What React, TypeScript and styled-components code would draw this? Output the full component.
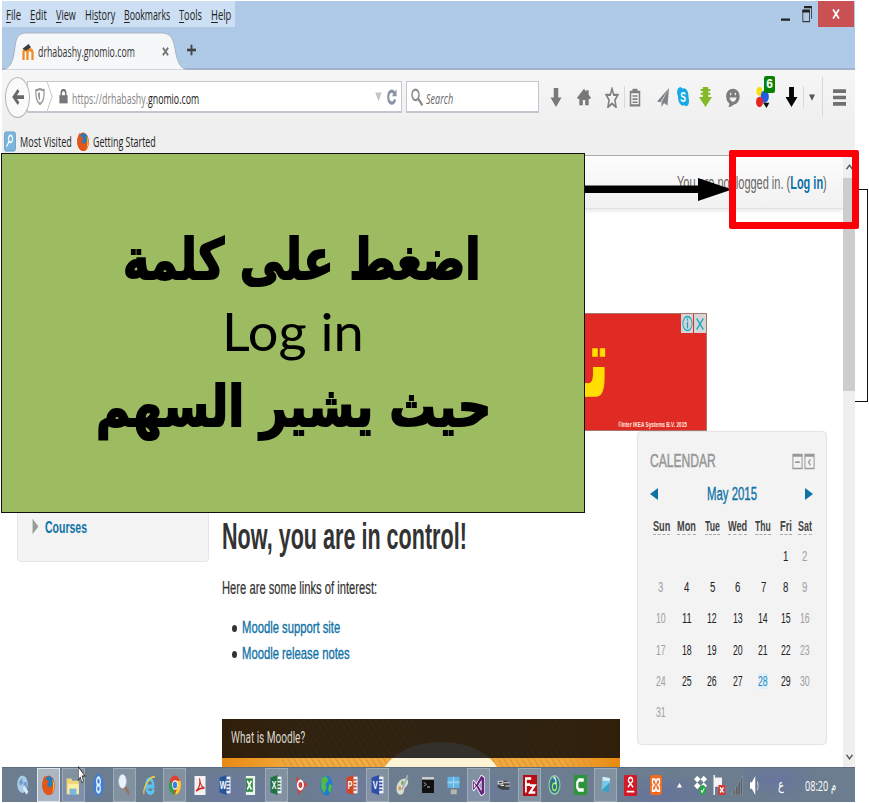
import React, { useLayoutEffect, useRef, useState, ReactNode } from "react";
import styled, { createGlobalStyle, css } from "styled-components";

const GlobalStyle = createGlobalStyle`
  * { box-sizing: border-box; }
  body { margin: 0; background: #fff; overflow: hidden; }
`;

const UI = `"Open Sans", "Noto Sans", sans-serif`;
const ARIAL = `"Liberation Sans", Arial, sans-serif`;

/* ---------- text squeezed to a given width ---------- */
const FitBox = styled.span<{ $w: number }>`
  display: inline-block;
  width: ${(p) => p.$w}px;
  white-space: nowrap;
  flex: none;
`;
const FitInner = styled.span`
  display: inline-block;
  transform-origin: 0 50%;
`;
function Fit({ w, children, rtl }: { w: number; children: ReactNode; rtl?: boolean }) {
  const ref = useRef<HTMLSpanElement>(null);
  const [scale, setScale] = useState(1);
  useLayoutEffect(() => {
    if (ref.current) setScale(w / ref.current.offsetWidth);
  }, [w]);
  return (
    <FitBox $w={w} dir="ltr">
      <FitInner ref={ref} dir={rtl ? "rtl" : "ltr"} style={{ transform: `scaleX(${scale})` }}>
        {children}
      </FitInner>
    </FitBox>
  );
}

/* ---------- icons ---------- */
const Svg = styled.svg<{ $w: number; $h: number }>`
  display: block;
  flex: none;
  width: ${(p) => p.$w}px;
  height: ${(p) => p.$h}px;
`;
function Icon({ w, h, children }: { w: number; h: number; children: ReactNode }) {
  return (
    <Svg $w={w} $h={h} viewBox="0 0 24 24" preserveAspectRatio="none">
      {children}
    </Svg>
  );
}
const Letter = ({ x = 12, y = 18, size = 17, fill = "#fff", children }: { x?: number; y?: number; size?: number; fill?: string; children: ReactNode }) => (
  <text x={x} y={y} fontSize={size} fill={fill} fontFamily="Liberation Sans, sans-serif" fontWeight="bold" textAnchor="middle">
    {children}
  </text>
);
const Firefox = () => (
  <>
    <circle cx="12" cy="12" r="11.5" fill="#d9501a" />
    <circle cx="13" cy="9.5" r="8" fill="#1f7fc0" />
    <path d="M1 8C2 5 4 3 5 1l3 5c2 0 4 1 5 3-2 0-3 1-3 3 1 3 5 4 8 1 2-2 2-5 1-8 6 6 5 15-1 18C9 27-2 20 1 8z" fill="#e0561b" />
    <path d="M19 5c5 5 5 12 0 16 2-5 2-10 0-16z" fill="#fbc02d" />
  </>
);
const DownArrow = ({ fill }: { fill: string }) => <path d="M7.500 0h9v12H23L12 24 1 12h6.500z" fill={fill} />;

/* ---------- frame ---------- */
const Slide = styled.div`
  position: relative;
  width: 869px;
  height: 803px;
  background: #fff;
  overflow: hidden;
  padding: 1px 0 0 2px;
`;
const Screen = styled.div`
  width: 853px;
  height: 801px;
  display: flex;
  flex-direction: column;
`;
const TitleArea = styled.div`
  height: 69px;
  background: #afcae7;
  border-bottom: 2px solid #a3b3c9;
  display: grid;
  grid-template-rows: 26px 41px;
`;
const TitleRow = styled.div`
  display: flex;
  justify-content: space-between;
  align-items: flex-start;
`;
const MenuBar = styled.div`
  display: flex;
  gap: 9px;
  width: 233px;
  height: 26px;
  padding: 0 0 0 4px;
  align-items: center;
  background: #cddff2;
  font: 14.5px ${UI};
  color: #222;
`;
const Key = styled.span`
  text-decoration: underline;
  text-underline-offset: 2px;
`;
const WindowButtons = styled.div`
  display: flex;
  align-items: center;
  height: 26px;
`;
const CloseButton = styled.div`
  width: 36px;
  height: 26px;
  margin: 0 1px 0 6px;
  background: #c95053;
  display: flex;
  align-items: center;
  justify-content: center;
`;
const TabRow = styled.div`
  display: flex;
  align-items: flex-start;
  padding-top: 5px;
`;
const Tab = styled.div`
  position: relative;
  width: 185px;
  height: 38px;
  display: flex;
  align-items: center;
  padding: 1px 0 0 20px;
  font: 14.5px ${UI};
  color: #333;
`;
const TabShape = styled.svg`
  position: absolute;
  inset: 0;
  width: 185px;
  height: 38px;
`;
const TabContent = styled.div`
  position: relative;
  display: flex;
  align-items: center;
`;
const Space = styled.span<{ $w: number }>`
  flex: none;
  width: ${(p) => p.$w}px;
`;

const NavBar = styled.div`
  height: 57px;
  background: linear-gradient(#f6f6f7, #efefef);
  display: flex;
  align-items: center;
  padding: 0 0 3px 3px;
`;
const BackButton = styled.div`
  width: 25px;
  height: 41px;
  border: 1px solid #b4b4b4;
  border-radius: 50%;
  background: #fafafa;
  display: flex;
  align-items: center;
  justify-content: center;
  z-index: 1;
`;
const Field = styled.div<{ $w: number; $ml?: number; $pl: number }>`
  width: ${(p) => p.$w}px;
  margin-left: ${(p) => p.$ml ?? 0}px;
  padding-left: ${(p) => p.$pl}px;
  height: 32px;
  background: #fff;
  border: 1px solid #c2c6ce;
  border-bottom-width: 2px;
  display: flex;
  align-items: center;
  font: 14.5px ${UI};
  color: #858585;
`;
const UrlText = styled.span`
  padding-top: 3px;
`;
const Italic = styled.span`
  font-style: italic;
  color: #666;
  padding-top: 3px;
`;
const Dark = styled.span`
  color: #222;
`;
const Slot = styled.div<{ $ml: number }>`
  margin-left: ${(p) => p.$ml}px;
  flex: none;
`;
const Separator = styled.div<{ $ml: number; $h: number }>`
  margin-left: ${(p) => p.$ml}px;
  flex: none;
  width: 1px;
  height: ${(p) => p.$h}px;
  background: #d9d9d9;
`;
const BadgeHost = styled(Slot)`
  position: relative;
`;
const Badge = styled.span`
  position: absolute;
  left: 8px;
  top: -11px;
  width: 11px;
  height: 17px;
  border-radius: 2px;
  background: #078207;
  color: #fff;
  font: bold 12px/17px ${ARIAL};
  text-align: center;
`;
const BookmarksBar = styled.div`
  height: 29px;
  background: #efefef;
  border-bottom: 1px solid #aaa;
  display: flex;
  align-items: center;
  padding-left: 2px;
  font: 14.5px ${UI};
  color: #222;
`;

/* ---------- page ---------- */
const Viewport = styled.div`
  height: 611px;
  display: flex;
`;
const Page = styled.div`
  width: 841px;
  height: 611px;
  overflow: hidden;
  background: #fff;
`;
const PageHeader = styled.div`
  height: 53px;
  background: linear-gradient(#fdfdfd, #f1f1f1);
  border-bottom: 1px solid #e1e1e1;
  box-shadow: 0 2px 4px #e8e8e8;
  display: flex;
  justify-content: flex-end;
  padding: 17px 16px 0 0;
  font: 17.5px/20px ${ARIAL};
  color: #666;
`;
const Link = styled.span<{ $bold?: boolean }>`
  color: #0f72a6;
  ${(p) => (p.$bold ? css`font-weight: bold;` : css`-webkit-text-stroke: 0.35px #0f72a6;`)}
`;
const Ad = styled.div`
  position: relative;
  width: 485px;
  height: 118px;
  margin: 104px 0 0 220px;
  background: #e02a24;
  border: 1px solid #a9756d;
  display: flex;
  justify-content: flex-end;
  align-items: flex-end;
  padding: 0 19px 1px 0;
  font: bold 7px/9px ${ARIAL};
  color: #ffe9df;
`;
const AdWord = styled.div`
  position: absolute;
  right: 97px;
  top: 2px;
  font: bold 72px/92px "DejaVu Sans", sans-serif;
  color: #ffde00;
  -webkit-text-stroke: 1px #ffde00;
  transform-origin: 100% 50%;
  transform: scale(0.85, 1.35);
`;
const AdControls = styled.div`
  position: absolute;
  top: 0;
  right: 0;
  display: flex;
  gap: 1px;
`;
const AdControl = styled.div`
  width: 12px;
  height: 19px;
  background: #d5d5d5;
  display: flex;
  align-items: center;
  justify-content: center;
`;
const Columns = styled.div`
  display: grid;
  grid-template-columns: 192px 398px 194px;
  column-gap: 13px;
  padding-left: 15px;
  align-items: start;
`;
const NavBlock = styled.div`
  height: 131px;
  background: #f4f4f4;
  border: 1px solid #e6e6e6;
  border-radius: 4px;
  display: flex;
  align-items: flex-start;
  padding: 86px 0 0 14px;
  font: 17px/20px ${ARIAL};
`;
const Main = styled.div`
  height: 336px;
  display: flex;
  flex-direction: column;
  font: 17px/20px ${ARIAL};
  color: #333;
`;
const Heading = styled.div`
  margin-top: 85px;
  font: bold 36px/42px ${ARIAL};
`;
const Paragraph = styled.div`
  margin-top: 20px;
  font-size: 17.5px;
  -webkit-text-stroke: 0.2px #333;
`;
const Links = styled.div`
  margin-top: 17px;
  padding-left: 10px;
  line-height: 26px;
`;
const LinkRow = styled.div`
  display: flex;
  align-items: center;
  gap: 5px;
  height: 26px;
`;
const Dot = styled.span`
  width: 5px;
  height: 7px;
  border-radius: 50%;
  background: #333;
`;
const Video = styled.div`
  margin-top: 52px;
  height: 48px;
  position: relative;
  flex: none;
  overflow: hidden;
`;
const VideoArt = styled.svg`
  display: block;
  width: 398px;
  height: 48px;
`;
const VideoTitle = styled.div`
  position: absolute;
  left: 0;
  top: 0;
  width: 398px;
  height: 39px;
  padding: 9px;
  background: rgba(12, 10, 8, 0.84);
  color: #dcd6cc;
  font: 16px/20px Roboto, sans-serif;
`;
const Calendar = styled.div`
  margin-left: 4px;
  height: 314px;
  background: #f3f3f3;
  border: 1px solid #e4e4e4;
  border-radius: 4px;
  padding: 16px 10px 0;
`;
const CalTitle = styled.div`
  height: 26px;
  display: flex;
  align-items: center;
  padding: 0 1px 0 2px;
  font: 18.5px ${ARIAL};
  color: #969696;
  -webkit-text-stroke: 0.5px #969696;
`;
const CalButtons = styled.div`
  margin-left: auto;
  display: flex;
  gap: 1px;
`;
const Month = styled.div`
  height: 40px;
  display: flex;
  align-items: center;
  justify-content: space-between;
  padding: 0 3px 0 2px;
  font: 18px ${ARIAL};
`;
const Days = styled.div`
  display: grid;
  grid-template-columns: 26px 25.8px 25.4px 25.6px 25.4px 18.8px 20px;
  grid-template-rows: 27px repeat(6, 31.3px);
  margin-top: -1px;
  justify-items: center;
  align-items: center;
`;
const DayName = styled.div`
  font: bold 14px/15px ${ARIAL};
  color: #444;
  border-bottom: 1px dashed #aaa;
`;
const Day = styled.div<{ $tone: string }>`
  font: 14px/16px ${ARIAL};
  ${(p) =>
    p.$tone === "weekend"
      ? css`color: #a0a0a0;`
      : p.$tone === "today"
      ? css`color: #2289c4; background: #e2f0fa;`
      : css`color: #222;`}
`;
const ScrollBar = styled.div`
  width: 12px;
  height: 611px;
  background: #efefef;
  display: flex;
  flex-direction: column;
  align-items: center;
  padding: 8px 0 7px;
`;
const Thumb = styled.div`
  margin: 8px 0 auto;
  width: 12px;
  height: 213px;
  background: #cdcdcd;
`;

/* ---------- task bar ---------- */
const TaskBar = styled.div`
  height: 35px;
  border-top: 1px solid #5d6c80;
  background:
    radial-gradient(ellipse 45px 14px at 65px 26px, #6278a9cc, transparent),
    radial-gradient(ellipse 60px 22px at 230px 22px, #6d76a9aa, transparent),
    radial-gradient(ellipse 50px 22px at 345px 20px, #7179a9aa, transparent),
    radial-gradient(ellipse 45px 18px at 480px 22px, #6a78a3aa, transparent),
    radial-gradient(ellipse 60px 20px at 660px 25px, #626ea0aa, transparent),
    radial-gradient(ellipse 40px 18px at 775px 12px, #6670a5aa, transparent),
    #6b7d8f;
  display: flex;
  align-items: center;
`;
const Apps = styled.div`
  display: grid;
  grid-template-columns: repeat(26, 25.35px);
  padding-left: 8px;
  width: 669px;
`;
const AppButton = styled.div<{ $state?: "open" | "active" }>`
  height: 34px;
  width: 23px;
  justify-self: center;
  display: flex;
  align-items: center;
  justify-content: center;
  border: 1px solid transparent;
  ${(p) => p.$state === "open" && css`border-color: #9daab8; background: #ffffff28;`}
  ${(p) => p.$state === "active" && css`border-color: #dfe4ea; background: #ffffff70;`}
`;
const Tray = styled.div`
  display: flex;
  align-items: center;
  color: #fff;
  font: 15px ${UI};
`;
const LangMark = styled.span`
  font: 15px "DejaVu Sans", sans-serif;
`;

/* ---------- annotations laid over the screen ---------- */
const Callout = styled.div`
  position: absolute;
  left: 1px;
  top: 153px;
  width: 584px;
  height: 360px;
  background: #9dbb61;
  border: 1.5px solid #111;
  color: #000;
  display: flex;
  flex-direction: column;
  align-items: center;
  padding-top: 68px;
`;
const ArabicLine = styled.div<{ $dx: number }>`
  height: 75px;
  margin-left: ${(p) => p.$dx}px;
  font: bold 56px/75px "DejaVu Sans", sans-serif;
  -webkit-text-stroke: 2px #000;
`;
const LatinLine = styled.div`
  height: 72px;
  font: 53px/68px Lato, "Open Sans", sans-serif;
`;
const Arrow = styled.svg`
  position: absolute;
  left: 585px;
  top: 177px;
  width: 148px;
  height: 25px;
`;
const Connector = styled.div`
  position: absolute;
  left: 855px;
  top: 189px;
  width: 13px;
  height: 213px;
  border: solid #111;
  border-width: 1px 1px 1px 0;
`;
const Highlight = styled.div`
  position: absolute;
  left: 729px;
  top: 150px;
  width: 130px;
  height: 79px;
  border: 7px solid #fb0007;
  border-radius: 2px;
`;
const Pointer = styled.div`
  position: absolute;
  left: 78px;
  top: 766px;
`;

const menus: [string, string, string, number][] = [
  ["", "F", "ile", 15], ["", "E", "dit", 17], ["", "V", "iew", 20], ["Hi", "s", "tory", 30],
  ["", "B", "ookmarks", 46], ["", "T", "ools", 23], ["", "H", "elp", 20],
];
const dayNames: [string, number][] = [["Sun", 17], ["Mon", 19], ["Tue", 15], ["Wed", 19], ["Thu", 16], ["Fri", 12], ["Sat", 14]];
const cells: (number | null)[] = [null, null, null, null, null, ...Array.from({ length: 31 }, (_, i) => i + 1)];

const sheet = (bg: string, letter: string) => (
  <>
    <path d="M9 2h14v20H9z" fill="#eef3f8" />
    <path d="M15 6h6M15 10h6M15 14h6M15 18h6" stroke={bg} strokeWidth="2" />
    <path d="M1 3l14-3v24L1 21z" fill={bg} />
    <Letter x={8} y={17} size={14}>{letter}</Letter>
  </>
);

const apps: { state?: "open" | "active"; w?: number; h?: number; art: ReactNode }[] = [
  { w: 12, h: 20, art: <><circle cx="11" cy="11" r="10.5" fill="#a8cbe6" /><path d="M4 8l6-4 2 6-5 3zM13 9l6-1 1 7-6 4z" fill="#6f9dc7" /><path d="M13 14l8 8" stroke="#d8e9f5" strokeWidth="5" /></> },
  { state: "active", w: 13, h: 20, art: <Firefox /> },
  { state: "open", w: 14, h: 19, art: <><path d="M1 3h8l2 3h11v17H1z" fill="#eed57a" /><path d="M3 10h19v13H3z" fill="#fbeea5" /><path d="M6 16h12v8H6z" fill="#79b7d8" /></> },
  { w: 11, h: 22, art: <><rect x="1" width="22" height="24" rx="11" fill="#3e7ed7" /><circle cx="12" cy="8" r="4" fill="none" stroke="#d8ebff" strokeWidth="3" /><circle cx="12" cy="16" r="4" fill="none" stroke="#d8ebff" strokeWidth="3" /></> },
  { state: "open", w: 12, h: 22, art: <><path d="M13 13l9 9" stroke="#9a735f" strokeWidth="4" /><circle cx="9" cy="8" r="7.5" fill="#eaf3fa" stroke="#c4d2e5" /></> },
  { w: 13, h: 23, art: <><path d="M20 16c-3 6-14 5-14-4s13-9 13 1H7" fill="none" stroke="#5cc4f3" strokeWidth="4" /><path d="M2 21C-1 15 12 2 22 3" fill="none" stroke="#f1cc43" strokeWidth="2" /></> },
  { state: "open", w: 12, h: 20, art: <><circle cx="12" cy="12" r="11.5" fill="#e0402f" /><path d="M2 6l6 8 4 9.500C0 24-2 13 2 6z" fill="#2fa24c" /><path d="M12 7h11c3 9-3 17-11 16.500l5-9z" fill="#fccd30" /><circle cx="12" cy="12" r="5" fill="#3a7fe0" stroke="#fff" strokeWidth="1.500" /></> },
  { w: 12, h: 19, art: <><path d="M1 0h22v24H1z" fill="#f4f1f1" /><path d="M4 19c6-3 9-9 7-16 2 9 5 12 10 12-6 0-11 1-17 4z" fill="none" stroke="#d5282c" strokeWidth="2" /></> },
  { w: 12, h: 20, art: sheet("#27549b", "W") },
  { w: 11, h: 19, art: <><path d="M2 0h20v24H2z" fill="#e9f3e7" /><path d="M2 3h15v17H2z" fill="#2f8a46" /><path d="M5 6l9 11M14 6L5 17" stroke="#fff" strokeWidth="3" /></> },
  { state: "open", w: 12, h: 20, art: sheet("#1f7346", "X") },
  { w: 13, h: 20, art: <><path d="M2 2l21 9-17 13z" fill="#d9403f" /><circle cx="10" cy="12" r="5" fill="#d9403f" stroke="#fff" strokeWidth="3" /></> },
  { w: 13, h: 21, art: <><circle cx="12" cy="12" r="11.500" fill="#247bd0" /><path d="M3 4l8-3 5 5-6 4 2 5-5 6-5-7zM17 10l6 2-4 9-4-4z" fill="#52ba46" /></> },
  { w: 12, h: 20, art: sheet("#d14424", "P") },
  { state: "open", w: 13, h: 20, art: sheet("#314fa6", "V") },
  { w: 13, h: 21, art: <><path d="M1 17C0 9 9 3 19 4c6 3 3 7 0 9-4 1-3 4-6 8C8 24 2 22 1 17z" fill="#dadbd1" /><circle cx="7" cy="15" r="2.500" fill="#df9448" /><circle cx="12" cy="9" r="2.500" fill="#76a866" /><path d="M22 0L11 17" stroke="#a4b3ba" strokeWidth="3" /></> },
  { w: 12, h: 16, art: <><path d="M0 0h24v24H0z" fill="#111" /><path d="M0 0h24v4H0z" fill="#c9ced2" /><path d="M4 8l4 3-4 3M10 15h6" fill="none" stroke="#ddd" strokeWidth="1.500" /></> },
  { w: 13, h: 19, art: <><path d="M1 1h22v14H1z" fill="#64b5e4" /><path d="M1 8h22M12 1v14" stroke="#9bd5f3" strokeWidth="2" /><path d="M7 17h11v6H7z" fill="#b7b8ab" /></> },
  { state: "open", w: 13, h: 21, art: <path d="M17 0l6 3v18l-6 3-9-10-5 4-2-2V8l2-2 5 4zM17 7l-5 5 5 5zM4 10v4l2-2z" fill="#68217a" stroke="#fff" strokeWidth="1.200" /> },
  { w: 14, h: 13, art: <><path d="M1 3h15l5 5v12H8L1 15z" fill="#3c4146" /><path d="M2 4h8v5H2zM12 7h10M6 12h6M14 13h8" stroke="#ddd" strokeWidth="2" fill="none" /></> },
  { state: "open", w: 14, h: 21, art: <><path d="M0 0h24v24H0z" fill="#b70d14" /><path d="M5 20V4h9M5 11h7M12 12h8l-8 8h9" fill="none" stroke="#fff" strokeWidth="3" /></> },
  { w: 13, h: 22, art: <><circle cx="12" cy="12" r="10" fill="#237b89" stroke="#9fc5b1" strokeWidth="2" /><circle cx="12" cy="14" r="4" fill="none" stroke="#bce35b" strokeWidth="2" /><path d="M10 4c4 0 5 2 5 7" fill="none" stroke="#fff" strokeWidth="2" /></> },
  { w: 13, h: 20, art: <><path d="M0 0h24v24H0z" fill="#2a9638" /><path d="M18 6H9L6 9v6l3 3h9" fill="none" stroke="#fff" strokeWidth="4" /></> },
  { state: "open", w: 11, h: 18, art: <><path d="M6 1l16 2-3 19-16-3z" fill="#71c9e3" /><path d="M6 1l16 2-1 4L5 6z" fill="#d2edf5" /><path d="M3 19l16 3 2-13z" fill="#3a9fc4" /></> },
  { w: 13, h: 21, art: <><rect width="24" height="24" rx="2" fill="#d31926" /><path d="M7 14l9-7c0-6-8-5-8 0l9 7M5 19h14" fill="none" stroke="#fff" strokeWidth="2.200" /></> },
  { w: 12, h: 20, art: <><rect width="24" height="24" rx="3" fill="#f26b21" /><path d="M5 5h5l2 4 2-4h5v5l-3 2 3 2v5h-5l-2-4-2 4H5v-5l3-2-3-2z" fill="none" stroke="#fff" strokeWidth="2.500" /></> },
];

export default function App() {
  return (
    <>
      <GlobalStyle />
      <Slide>
        <Screen>
          <TitleArea>
            <TitleRow>
              <MenuBar>
                {menus.map(([a, k, b, w]) => (
                  <Fit key={b} w={w}>{a}<Key>{k}</Key>{b}</Fit>
                ))}
              </MenuBar>
              <WindowButtons>
                <Icon w={9} h={18}><path d="M0 18h24v3H0z" fill="#222" /></Icon>
                <Space $w={12} />
                <Icon w={10} h={17}><path d="M5 0h18v18M2 7h16v15H2z" fill="none" stroke="#333" strokeWidth="2" /><path d="M5 0h18v3H5zM1 5h18v4H1z" fill="#222" /></Icon>
                <CloseButton>
                  <Icon w={8} h={10}><path d="M3 1l18 22M21 1L3 23" stroke="#fff" strokeWidth="5" /></Icon>
                </CloseButton>
              </WindowButtons>
            </TitleRow>
            <TabRow>
              <Tab>
                <TabShape viewBox="0 0 185 38">
                  <path d="M0 38C9 36 11 30 13 15 14 6 16 1 24 1H160c8 0 11 5 13 15 2 14 5 20 12 22z" fill="#f6f7f9" stroke="#a8b5c6" />
                </TabShape>
                <TabContent>
                  <Icon w={12} h={16}><path d="M3 24V13c0-6 8-6 8 0v11m0-11c0-6 10-6 10 0v11" fill="none" stroke="#f08a24" strokeWidth="4.500" /><path d="M1 7L13 0l5 5-10 5z" fill="#3b3b3b" /></Icon>
                  <Space $w={4} />
                  <Fit w={97}>drhabashy.gnomio.com</Fit>
                  <Space $w={27} />
                  <Icon w={7} h={9}><path d="M3 2l18 20M21 2L3 22" stroke="#777" strokeWidth="6" /></Icon>
                </TabContent>
              </Tab>
              <Slot $ml={0}>
                <Icon w={9} h={36}><path d="M0 12h24" stroke="#444" strokeWidth="1.800" /><path d="M12 8.500v7" stroke="#444" strokeWidth="5" /></Icon>
              </Slot>
            </TabRow>
          </TitleArea>

          <NavBar>
            <BackButton>
              <Icon w={12} h={18}><path d="M13 3L4 12l9 9M4 12h20" fill="none" stroke="#686868" strokeWidth="5" /></Icon>
            </BackButton>
            <Field $w={375} $ml={-3} $pl={7}>
              <Icon w={10} h={17}><path d="M12 1c4 2 7 2 10 2 0 9-1 16-10 20C3 19 2 12 2 3c3 0 6 0 10-2z" fill="none" stroke="#999" strokeWidth="3" /><path d="M12 6v12c-4-3-5-6-5-11z" fill="#999" /></Icon>
              <Space $w={1} />
              <Icon w={7} h={29}><path d="M4 0l17 12L4 24" fill="none" stroke="#c4c4c4" strokeWidth="1.800" /></Icon>
              <Space $w={6} />
              <Icon w={9} h={15}><path d="M1 10h22v13H1z" fill="#777" /><path d="M6 11V7c0-7 12-7 12 0v4" fill="none" stroke="#777" strokeWidth="4" /></Icon>
              <Space $w={4} />
              <UrlText><Fit w={127}>https://drhabashy.<Dark>gnomio.com</Dark></Fit></UrlText>
              <Space $w={176} />
              <Icon w={7} h={10}><path d="M1 1h22L12 23z" fill="#c4c5cb" /></Icon>
              <Space $w={5} />
              <Icon w={10} h={16}><path d="M20 16C14 25 3 21 3 12S14 0 19 8" fill="none" stroke="#8c93a5" strokeWidth="5" /><path d="M23 0v11H12z" fill="#8c93a5" /></Icon>
            </Field>
            <Field $w={133} $ml={4} $pl={4}>
              <Icon w={12} h={18}><circle cx="9" cy="9" r="7" fill="none" stroke="#8b8b8b" strokeWidth="3" /><path d="M14 14l9 9" stroke="#8b8b8b" strokeWidth="4" /></Icon>
              <Space $w={3} />
              <Italic><Fit w={27}>Search</Fit></Italic>
            </Field>
            <Slot $ml={11}><Icon w={12} h={19}><DownArrow fill="#77787a" /></Icon></Slot>
            <Slot $ml={15}><Icon w={14} h={18}><path d="M12 1L0 13l2 2 2-1v9h6v-7h4v7h6v-9l2 1 2-2-4-4V3h-4v2z" fill="#77787a" /></Icon></Slot>
            <Slot $ml={14}><Icon w={14} h={21}><path d="M12 2l3 7h7l-5 6 2 8-7-4-7 4 2-8-5-6h7z" fill="none" stroke="#808080" strokeWidth="2.600" /></Icon></Slot>
            <Separator $ml={5} $h={22} />
            <Slot $ml={4}><Icon w={12} h={19}><path d="M3 5h18v17H3z" fill="none" stroke="#808080" strokeWidth="3" /><path d="M7 1h10v5H7z" fill="#808080" /><path d="M7 10h10M7 14h10M7 18h10" stroke="#808080" strokeWidth="2" /></Icon></Slot>
            <Slot $ml={16}><Icon w={12} h={19}><path d="M24 0L0 17l7 1zM24 0L9 18v6l5-5 7 3z" fill="#808386" /></Icon></Slot>
            <Slot $ml={8}><Icon w={12} h={20}><path d="M7 0C1 0-2 6 2 11c0 10 8 12 13 11 7 4 11-4 8-9C24 4 16 0 11 2 9 1 8 0 7 0z" fill="#16a9e6" /><Letter y={18}>S</Letter></Icon></Slot>
            <Slot $ml={10}><Icon w={13} h={20}><path d="M7 0h10v12h7L12 24 0 12h7z" fill="#83b927" /><path d="M3 3.500h18M3 8h18" stroke="#83b927" strokeWidth="2.500" /></Icon></Slot>
            <Slot $ml={14}><Icon w={14} h={19}><path d="M12 1c15 0 15 19 1 20-4 3-7 3-9 3 2-2 2-4 1-5C-3 14-1 1 12 1z" fill="#7b7c7e" /><path d="M6 12h12c-1 7-11 7-12 0zM7 6h2v3H7zM15 6h2v3h-2z" fill="#f1f1f1" /></Icon></Slot>
            <BadgeHost $ml={16}>
              <Icon w={14} h={21}><circle cx="6" cy="5" r="5" fill="#f4df08" /><circle cx="15" cy="11" r="7" fill="#235be0" /><circle cx="6" cy="17" r="6" fill="#e82420" /><path d="M12 18h11l-5 6z" fill="#111" /></Icon>
              <Badge>6</Badge>
            </BadgeHost>
            <Slot $ml={15}><Icon w={13} h={20}><DownArrow fill="#050505" /></Icon></Slot>
            <Separator $ml={5} $h={22} />
            <Slot $ml={5}><Icon w={6} h={7}><path d="M0 2h24L12 23z" fill="#555" /></Icon></Slot>
            <Separator $ml={7} $h={40} />
            <Slot $ml={10}><Icon w={13} h={17}><path d="M0 3h24M0 12h24M0 21h24" stroke="#707070" strokeWidth="5" /></Icon></Slot>
          </NavBar>

          <BookmarksBar>
            <Icon w={12} h={21}><rect x="1" y="1" width="22" height="22" rx="3" fill="#79b5dc" stroke="#5b93bd" /><circle cx="13" cy="9" r="4" fill="none" stroke="#fff" strokeWidth="2" /><path d="M10 12l-5 6" stroke="#fff" strokeWidth="2" /></Icon>
            <Space $w={4} />
            <Fit w={52}>Most Visited</Fit>
            <Space $w={5} />
            <Icon w={12} h={19}><Firefox /></Icon>
            <Space $w={4} />
            <Fit w={63}>Getting Started</Fit>
          </BookmarksBar>

          <Viewport>
            <Page>
              <PageHeader>
                <Fit w={150}>You are not logged in. (<Link $bold>Log in</Link>)</Fit>
              </PageHeader>
              <Ad>
                <AdWord dir="rtl">تعـ</AdWord>
                <Fit w={69}>©Inter IKEA Systems B.V. 2015</Fit>
                <AdControls>
                  <AdControl><Icon w={11} h={17}><circle cx="12" cy="12" r="10" fill="none" stroke="#15a5c2" strokeWidth="2" /><path d="M12 5v3M12 10v9" stroke="#15a5c2" strokeWidth="3" /></Icon></AdControl>
                  <AdControl><Icon w={8} h={12}><path d="M2 1l20 22M22 1L2 23" stroke="#15a5c2" strokeWidth="3.500" /></Icon></AdControl>
                </AdControls>
              </Ad>
              <Columns>
                <NavBlock>
                  <Icon w={7} h={17}><path d="M2 1l20 11L2 23z" fill="#989d98" /></Icon>
                  <Space $w={6} />
                  <Link $bold><Fit w={42}>Courses</Fit></Link>
                </NavBlock>
                <Main>
                  <Heading><Fit w={245}>Now, you are in control!</Fit></Heading>
                  <Paragraph><Fit w={155}>Here are some links of interest:</Fit></Paragraph>
                  <Links>
                    <LinkRow><Dot /><Link><Fit w={98}>Moodle support site</Fit></Link></LinkRow>
                    <LinkRow><Dot /><Link><Fit w={108}>Moodle release notes</Fit></Link></LinkRow>
                  </Links>
                  <Video>
                    <VideoArt viewBox="0 0 398 48" preserveAspectRatio="none">
                      <defs>
                        <linearGradient id="amber"><stop offset="0" stopColor="#e98a12" /><stop offset=".2" stopColor="#f0ac43" /><stop offset=".85" stopColor="#f0a83c" /><stop offset="1" stopColor="#e78a12" /></linearGradient>
                        <pattern id="weave" width="6" height="10" patternUnits="userSpaceOnUse"><path d="M0 0l6 10" stroke="#de9632" strokeWidth="1.300" /></pattern>
                      </defs>
                      <path d="M0 0h398v48H0z" fill="url(#amber)" />
                      <path d="M60 0h310v48H60z" fill="url(#weave)" />
                      <ellipse cx="219" cy="64" rx="61" ry="41" fill="#fff3d6" />
                    </VideoArt>
                    <VideoTitle><Fit w={74}>What is Moodle?</Fit></VideoTitle>
                  </Video>
                </Main>
                <Calendar>
                  <CalTitle>
                    <Fit w={66}>CALENDAR</Fit>
                    <CalButtons>
                      <Icon w={11} h={17}><path d="M2 2h20v20H2z" fill="none" stroke="#999" strokeWidth="2.200" /><path d="M2 4h20M7 13h10" stroke="#999" strokeWidth="2.500" /></Icon>
                      <Icon w={11} h={17}><path d="M2 2h20v20H2z" fill="none" stroke="#999" strokeWidth="2.200" /><path d="M2 4h20M14 9l-4 4 4 4" fill="none" stroke="#999" strokeWidth="2.500" /></Icon>
                    </CalButtons>
                  </CalTitle>
                  <Month>
                    <Icon w={8} h={12}><path d="M24 0v24L0 12z" fill="#0f72a6" /></Icon>
                    <Link><Fit w={50}>May 2015</Fit></Link>
                    <Icon w={8} h={12}><path d="M0 0v24l24-12z" fill="#0f72a6" /></Icon>
                  </Month>
                  <Days>
                    {dayNames.map(([d, w]) => <DayName key={d}><Fit w={w}>{d}</Fit></DayName>)}
                    {cells.map((n, i) =>
                      n === null ? <span key={i} /> : (
                        <Day key={i} $tone={n === 28 ? "today" : i % 7 === 0 || i % 7 === 6 ? "weekend" : "normal"}>
                          <Fit w={n < 10 ? 5.5 : 10}>{n}</Fit>
                        </Day>
                      )
                    )}
                  </Days>
                </Calendar>
              </Columns>
            </Page>
            <ScrollBar>
              <Icon w={7} h={6}><path d="M2 21L12 5l10 16" fill="none" stroke="#555" strokeWidth="5" /></Icon>
              <Thumb />
              <Icon w={7} h={6}><path d="M2 3l10 16L22 3" fill="none" stroke="#555" strokeWidth="5" /></Icon>
            </ScrollBar>
          </Viewport>

          <TaskBar>
            <Apps>
              {apps.map((a, i) => (
                <AppButton key={i} $state={a.state}><Icon w={a.w ?? 12} h={a.h ?? 20}>{a.art}</Icon></AppButton>
              ))}
            </Apps>
            <Tray>
              <Space $w={6} />
              <Icon w={5} h={5}><path d="M0 22L12 0l12 22z" fill="#fff" /></Icon>
              <Space $w={12} />
              <Icon w={13} h={20}><path d="M6 1l6 4-6 4-6-4zM18 1l6 4-6 4-6-4zM6 9l6 4-6 4-6-4zM18 9l6 4-6 4-6-4z" fill="#fff" /><circle cx="16" cy="18" r="6" fill="#27a640" /><path d="M13 18l2 3 4-5" fill="none" stroke="#fff" strokeWidth="1.500" /></Icon>
              <Space $w={6} />
              <Icon w={12} h={20}><path d="M1 0h3v24H1zM4 3h14v11H4z" fill="#f3f3f3" /><path d="M11 12h13v12H11z" fill="#dd352e" /><path d="M14 15l7 6M21 15l-7 6" stroke="#fff" strokeWidth="2" /></Icon>
              <Space $w={6} />
              <Icon w={12} h={20}><path d="M0 24L23 1v23z" fill="#59626c" stroke="#929aa3" /><path d="M4 24v-4M9 24v-8M14 24V11M19 24V6" stroke="#8f989f" /></Icon>
              <Space $w={7} />
              <Icon w={9} h={19}><path d="M0 8h5l9-8v24l-9-8H0z" fill="#fff" /><path d="M19 7c4 4 4 7 0 11" fill="none" stroke="#ccd3da" strokeWidth="2" /></Icon>
              <Space $w={19} />
              <LangMark><Fit w={6} rtl>ع</Fit></LangMark>
              <Space $w={21} />
              <Fit w={23}>08:20</Fit>
              <Space $w={3} />
              <LangMark><Fit w={5} rtl>م</Fit></LangMark>
            </Tray>
          </TaskBar>
        </Screen>

        <Callout>
          <ArabicLine $dx={18}><Fit w={358} rtl>اضغط على كلمة</Fit></ArabicLine>
          <LatinLine><Fit w={142}>Log in</Fit></LatinLine>
          <ArabicLine $dx={0}><Fit w={395} rtl>حيث يشير السهم</Fit></ArabicLine>
        </Callout>
        <Connector />
        <Arrow viewBox="0 0 148 25"><path d="M0 8.500h113V1l34 11.500L113 24v-8H0z" fill="#000" /></Arrow>
        <Highlight />
        <Pointer>
          <Icon w={8} h={17}><path d="M1 1v19l6-4 5 8 4-3-4-7h9z" fill="#fff" stroke="#222" strokeWidth="1.500" /></Icon>
        </Pointer>
      </Slide>
    </>
  );
}
